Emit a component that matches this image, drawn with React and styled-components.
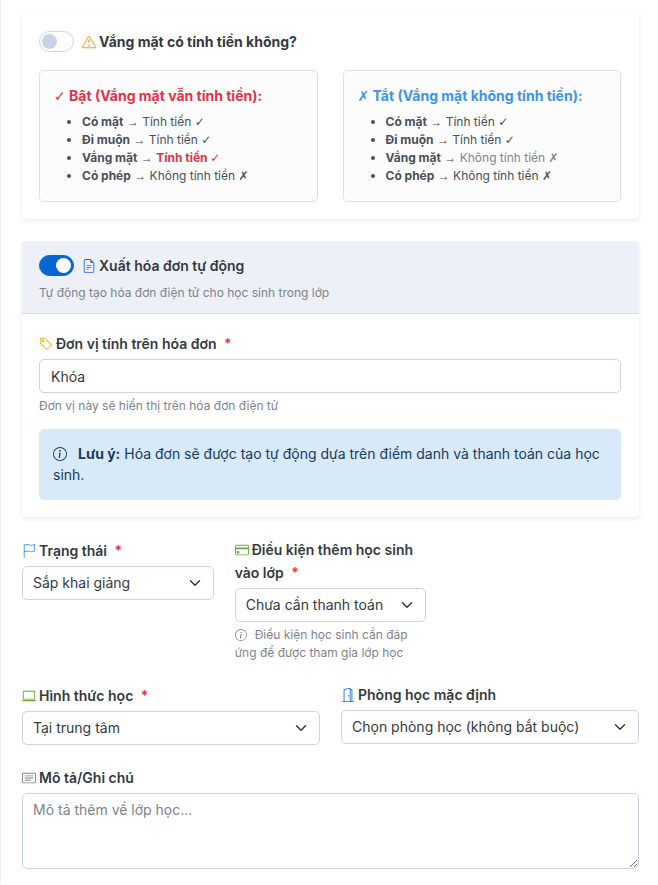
import React, { useState } from 'react';
import styled, { createGlobalStyle, css } from 'styled-components';
import {
    BsExclamationTriangle,
    BsFileEarmarkText,
    BsTag,
    BsInfoCircle,
    BsFlag,
    BsCreditCard,
    BsLaptop,
    BsDoorOpen,
    BsCardText
} from 'react-icons/bs';

const App = () => {
    const [chargeAbsence, setChargeAbsence] = useState(false);
    const [autoInvoice, setAutoInvoice] = useState(true);
    const [formData, setFormData] = useState({
        unit: 'Khóa',
        status: 'upcoming',
        condition: 'unpaid',
        mode: 'center',
        room: '',
        note: ''
    });

    const handleInputChange = (e) => {
        const { name, value } = e.target;
        setFormData(prevState => ({ ...prevState, [name]: value }));
    };

    return (
        <>
            <GlobalStyle />
            <Page>
                <Card>
                    <CardBody>
                        <SwitchRow $spaced>
                            <Switch
                                type="checkbox"
                                id="chargeAbsence"
                                checked={chargeAbsence}
                                onChange={e => setChargeAbsence(e.target.checked)}
                            />
                            <SwitchLabel htmlFor="chargeAbsence" $bold>
                                <Icon as={BsExclamationTriangle} $color="#f0a81c" />
                                Vắng mặt có tính tiền không?
                            </SwitchLabel>
                        </SwitchRow>
                        <Options>
                            <OptionBox>
                                <OptionTitle $color="#e03347"><Mark>✓</Mark> Bật (Vắng mặt vẫn tính tiền):</OptionTitle>
                                <OptionList>
                                    <li><strong>Có mặt</strong> <Mark>→</Mark> Tính tiền <Mark>✓</Mark></li>
                                    <li><strong>Đi muộn</strong> <Mark>→</Mark> Tính tiền <Mark>✓</Mark></li>
                                    <li><strong>Vắng mặt</strong> <Mark>→</Mark> <Danger>Tính tiền <Mark>✓</Mark></Danger></li>
                                    <li><strong>Có phép</strong> <Mark>→</Mark> Không tính tiền <Mark>✗</Mark></li>
                                </OptionList>
                            </OptionBox>
                            <OptionBox>
                                <OptionTitle $color="#3d94e6"><Mark>✗</Mark> Tắt (Vắng mặt không tính tiền):</OptionTitle>
                                <OptionList>
                                    <li><strong>Có mặt</strong> <Mark>→</Mark> Tính tiền <Mark>✓</Mark></li>
                                    <li><strong>Đi muộn</strong> <Mark>→</Mark> Tính tiền <Mark>✓</Mark></li>
                                    <li><strong>Vắng mặt</strong> <Mark>→</Mark> <Muted>Không tính tiền <Mark>✗</Mark></Muted></li>
                                    <li><strong>Có phép</strong> <Mark>→</Mark> Không tính tiền <Mark>✗</Mark></li>
                                </OptionList>
                            </OptionBox>
                        </Options>
                    </CardBody>
                </Card>

                <Card>
                    <CardHeader>
                        <SwitchRow>
                            <Switch
                                type="checkbox"
                                id="autoInvoice"
                                checked={autoInvoice}
                                onChange={e => setAutoInvoice(e.target.checked)}
                            />
                            <SwitchLabel htmlFor="autoInvoice">
                                <Icon as={BsFileEarmarkText} $color="#1a6fd6" />
                                Xuất hóa đơn tự động
                            </SwitchLabel>
                        </SwitchRow>
                        <Help>Tự động tạo hóa đơn điện tử cho học sinh trong lớp</Help>
                    </CardHeader>
                    <CardBody>
                        <Label htmlFor="unit">
                            <Icon as={BsTag} $color="#f0a81c" />
                            Đơn vị tính trên hóa đơn <Required>*</Required>
                        </Label>
                        <Input id="unit" name="unit" type="text" value={formData.unit} onChange={handleInputChange} />
                        <Help>Đơn vị này sẽ hiển thị trên hóa đơn điện tử</Help>
                        <Notice>
                            <Icon as={BsInfoCircle} $wide />
                            <strong>Lưu ý:</strong> Hóa đơn sẽ được tạo tự động dựa trên điểm danh và thanh toán của học sinh.
                        </Notice>
                    </CardBody>
                </Card>

                <FieldRow $columns={3}>
                    <Field>
                        <Label htmlFor="status">
                            <Icon as={BsFlag} $color="#3d94e6" />
                            Trạng thái <Required>*</Required>
                        </Label>
                        <Select id="status" name="status" value={formData.status} onChange={handleInputChange}>
                            <option value="upcoming">Sắp khai giảng</option>
                        </Select>
                    </Field>
                    <Field>
                        <Label htmlFor="condition">
                            <Icon as={BsCreditCard} $color="#6aa53a" />
                            Điều kiện thêm học sinh vào lớp <Required>*</Required>
                        </Label>
                        <Select id="condition" name="condition" value={formData.condition} onChange={handleInputChange}>
                            <option value="unpaid">Chưa cần thanh toán</option>
                        </Select>
                        <Help>
                            <Icon as={BsInfoCircle} $small />
                            Điều kiện học sinh cần đáp ứng để được tham gia lớp học
                        </Help>
                    </Field>
                </FieldRow>

                <FieldRow $columns={2}>
                    <Field>
                        <Label htmlFor="mode">
                            <Icon as={BsLaptop} $color="#6aa53a" />
                            Hình thức học <Required>*</Required>
                        </Label>
                        <Select id="mode" name="mode" value={formData.mode} onChange={handleInputChange}>
                            <option value="center">Tại trung tâm</option>
                        </Select>
                    </Field>
                    <Field>
                        <Label htmlFor="room">
                            <Icon as={BsDoorOpen} $color="#1a6fd6" />
                            Phòng học mặc định
                        </Label>
                        <Select id="room" name="room" value={formData.room} onChange={handleInputChange}>
                            <option value="">Chọn phòng học (không bắt buộc)</option>
                        </Select>
                    </Field>
                </FieldRow>

                <Field>
                    <Label htmlFor="note">
                        <Icon as={BsCardText} $color="#7c848c" />
                        Mô tả/Ghi chú
                    </Label>
                    <TextArea
                        id="note"
                        name="note"
                        placeholder="Mô tả thêm về lớp học..."
                        value={formData.note}
                        onChange={handleInputChange}
                    />
                </Field>
            </Page>
        </>
    );
}

export default App;

const GlobalStyle = createGlobalStyle`
    * {
        box-sizing: border-box;
    }

    body {
        margin: 0;
        background-color: white;
        color: #343a40;
        font-family: Inter, "DejaVu Sans", sans-serif;
        font-size: 14px;
        line-height: 22px;
    }

    strong {
        font-weight: 700;
    }
`;

const Page = styled.form`
    display: flex;
    flex-direction: column;
    gap: 22px;
    padding: 10px 19px 15px 21px;
    border-left: 1px solid #eff0f2;
`;

const Card = styled.section`
    background-color: white;
    border-radius: 4px;
    box-shadow: 0 2px 4px rgba(0, 0, 0, 0.08);
    overflow: hidden;
`;

const CardHeader = styled.header`
    padding: 11px 17px;
    background-color: #edf0f7;
    border-bottom: 1px solid #d9dfec;
`;

const CardBody = styled.div`
    padding: 18px 18px 17px 17px;
`;

const SwitchRow = styled.div`
    display: flex;
    align-items: center;
    gap: 8px;
    min-height: 27px;
    margin-bottom: ${props => props.$spaced ? '15px' : '5px'};
`;

const Switch = styled.input`
    appearance: none;
    display: flex;
    align-items: center;
    flex-shrink: 0;
    width: 35px;
    height: 21px;
    margin: 0;
    padding: 2px;
    background-color: white;
    border: 1px solid #cdd4ea;
    border-radius: 11px;
    cursor: pointer;

    &::before {
        content: '';
        width: 15px;
        height: 15px;
        border-radius: 50%;
        background-color: #cad2e8;
    }

    &:checked {
        justify-content: flex-end;
        background-color: #0866d4;
        border-color: #0866d4;
    }

    &:checked::before {
        background-color: white;
    }
`;

const SwitchLabel = styled.label`
    font-weight: ${props => props.$bold ? 700 : 600};
    cursor: pointer;
`;

const Icon = styled.svg`
    width: 14px;
    height: 14px;
    margin-right: 3px;
    color: ${props => props.$color || 'inherit'};
    vertical-align: -2px;

    ${props => props.$wide && css`
        margin-right: 11px;
    `}

    ${props => props.$small && css`
        width: 12px;
        height: 12px;
        margin-right: 8px;
    `}
`;

const Options = styled.div`
    display: grid;
    grid-template-columns: 1fr 1fr;
    gap: 25px;
`;

const OptionBox = styled.div`
    padding: 14px;
    background-color: #fcfcfd;
    border: 1px solid #d9dfec;
    border-radius: 5px;
`;

const OptionTitle = styled.h6`
    margin: 0 0 6px;
    font-size: 14px;
    font-weight: 700;
    color: ${props => props.$color};
`;

const OptionList = styled.ul`
    margin: 0;
    padding: 0 0 2px 28px;
    font-size: 12px;
    line-height: 18px;
    color: #495057;
`;

/* arrows, ticks and crosses */
const Mark = styled.span`
    font-family: "Liberation Sans", "DejaVu Sans", sans-serif;
    line-height: 1;
`;

const Danger = styled.strong`
    color: #e03347;
`;

const Muted = styled.span`
    color: #7c848c;
`;

const Field = styled.div`
    min-width: 0;
`;

const FieldRow = styled.div`
    display: grid;
    grid-template-columns: repeat(${props => props.$columns}, 1fr);
    gap: 21px;
`;

const Label = styled.label`
    display: block;
    margin-bottom: 4px;
    font-weight: 600;
`;

const Required = styled.span`
    display: inline-block;
    margin-left: 4px;
    line-height: 23px;
    color: #e03347;
`;

const control = css`
    display: block;
    width: 100%;
    padding: 5px 11px;
    background-color: white;
    border: 1px solid #cdd4ea;
    border-radius: 5px;
    color: #343a40;
    font: inherit;
`;

const Input = styled.input`
    ${control}
    height: 34px;
`;

const Select = styled.select`
    ${control}
    appearance: none;
    height: 34px;
    padding: 5px 32px 5px 10px;
    background-image: url("data:image/svg+xml,%3Csvg xmlns='http://www.w3.org/2000/svg' viewBox='0 0 16 16'%3E%3Cpath fill='none' stroke='%23343a40' stroke-linecap='round' stroke-linejoin='round' stroke-width='2' d='m2 5 6 6 6-6'/%3E%3C/svg%3E");
    background-repeat: no-repeat;
    background-position: right 12px center;
    background-size: 12px 12px;
`;

const TextArea = styled.textarea`
    ${control}
    height: 76px;
    padding: 5px 10px;
    resize: vertical;

    &::placeholder {
        color: #7c848c;
    }
`;

const Help = styled.div`
    margin-top: 4px;
    font-size: 12px;
    line-height: 18px;
    color: #7c848c;
`;

const Notice = styled.div`
    margin-top: 14px;
    padding: 14px 14px 15px;
    background-color: #d8e9f9;
    border-radius: 5px;
    line-height: 21px;
    color: #173b5c;
`;
